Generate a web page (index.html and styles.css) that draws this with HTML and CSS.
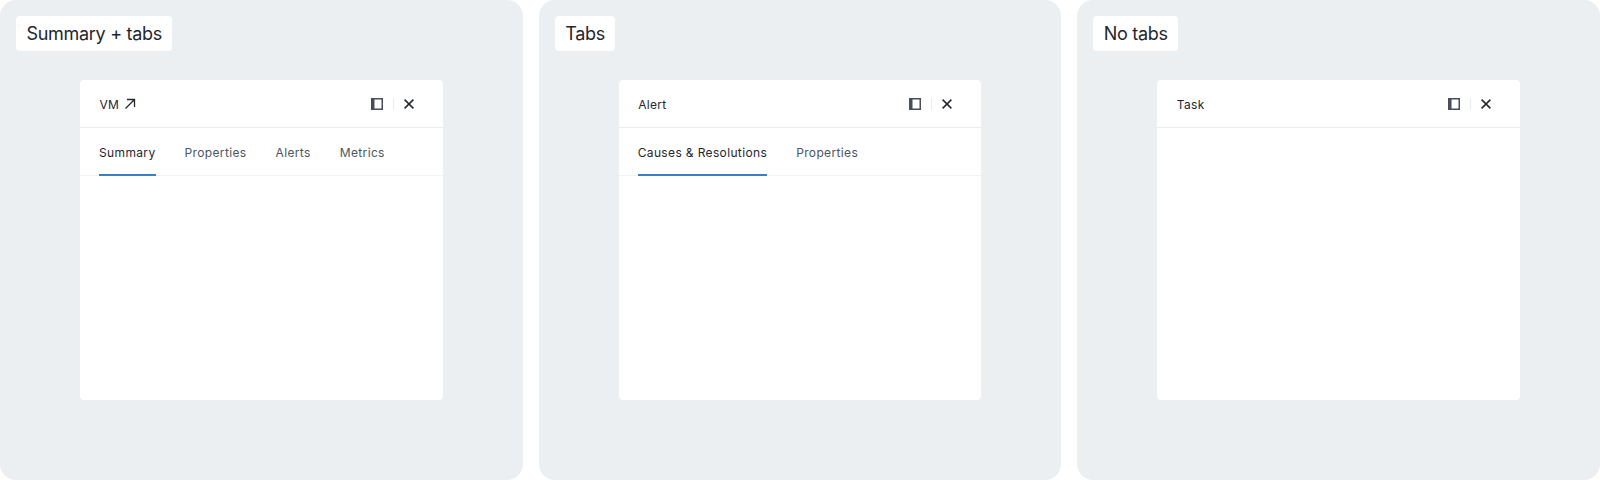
FILE: index.html
```html
<!DOCTYPE html>
<html lang="en">
<head>
    <meta charset="UTF-8">
    <meta name="viewport" content="width=device-width, initial-scale=1.0">
    <title>Side panel headers</title>
    <link rel="stylesheet" href="styles.css">
</head>
<body>
    <div class="panels">
        <section class="panel">
            <div class="panel-label">Summary + tabs</div>
            <div class="card">
                <div class="card-header">
                    <div class="card-title">
                        <span>VM</span>
                        <svg class="arrow-icon" viewBox="0 0 12 12" width="12" height="12"><path d="M1.5 10.5 10.5 1.5M3 1.5h7.5V9" fill="none" stroke="#22272e" stroke-width="1.3"/></svg>
                    </div>
                    <div class="card-actions">
                        <svg viewBox="0 0 12 12" width="12" height="12"><path d="M0 0h12v12H0zM3.5 1.5v9h7v-9z" fill="#454e5a" fill-rule="evenodd"/></svg>
                        <span class="divider"></span>
                        <svg viewBox="0 0 10 10" width="10" height="10"><path d="M.6.6l8.8 8.8M9.4.6.6 9.4" fill="none" stroke="#22272e" stroke-width="1.5"/></svg>
                    </div>
                </div>
                <div class="tabs">
                    <div class="tab active">Summary</div>
                    <div class="tab">Properties</div>
                    <div class="tab">Alerts</div>
                    <div class="tab">Metrics</div>
                </div>
            </div>
        </section>

        <section class="panel">
            <div class="panel-label">Tabs</div>
            <div class="card">
                <div class="card-header">
                    <div class="card-title"><span>Alert</span></div>
                    <div class="card-actions">
                        <svg viewBox="0 0 12 12" width="12" height="12"><path d="M0 0h12v12H0zM3.5 1.5v9h7v-9z" fill="#454e5a" fill-rule="evenodd"/></svg>
                        <span class="divider"></span>
                        <svg viewBox="0 0 10 10" width="10" height="10"><path d="M.6.6l8.8 8.8M9.4.6.6 9.4" fill="none" stroke="#22272e" stroke-width="1.5"/></svg>
                    </div>
                </div>
                <div class="tabs">
                    <div class="tab active">Causes &amp; Resolutions</div>
                    <div class="tab">Properties</div>
                </div>
            </div>
        </section>

        <section class="panel">
            <div class="panel-label">No tabs</div>
            <div class="card">
                <div class="card-header">
                    <div class="card-title"><span>Task</span></div>
                    <div class="card-actions">
                        <svg viewBox="0 0 12 12" width="12" height="12"><path d="M0 0h12v12H0zM3.5 1.5v9h7v-9z" fill="#454e5a" fill-rule="evenodd"/></svg>
                        <span class="divider"></span>
                        <svg viewBox="0 0 10 10" width="10" height="10"><path d="M.6.6l8.8 8.8M9.4.6.6 9.4" fill="none" stroke="#22272e" stroke-width="1.5"/></svg>
                    </div>
                </div>
            </div>
        </section>
    </div>
</body>
</html>
```

FILE: styles.css
```css
* {
    margin: 0;
    padding: 0;
    box-sizing: border-box;
}

body {
    font-family: 'Inter', 'Liberation Sans', sans-serif;
    background-color: white;
    color: #1f2630;
}

.panels {
    display: grid;
    grid-template-columns: repeat(3, 1fr);
    gap: 16px;
    height: 480px;
}

.panel {
    display: flex;
    flex-direction: column;
    align-items: flex-start;
    padding: 16px;
    background-color: #ebeff2;
    border-radius: 16px;
}

.panel-label {
    height: 35px;
    padding: 0 10.5px;
    line-height: 35px;
    font-size: 18px;
    letter-spacing: -0.3px;
    background-color: white;
    border-radius: 4px;
}

.card {
    align-self: stretch;
    height: 320px;
    margin: 29px 64px 0;
    background-color: white;
    border-radius: 4px;
}

.card-header {
    display: flex;
    justify-content: space-between;
    align-items: center;
    height: 48px;
    padding: 0 29px 0 19.5px;
    border-bottom: 1px solid #e9ebee;
}

.card-title {
    display: flex;
    align-items: center;
    gap: 5px;
    font-size: 12px;
    letter-spacing: 0.3px;
}

.card-title span {
    padding-top: 2px;
}

.card-actions {
    display: flex;
    align-items: center;
}

.divider {
    width: 1px;
    height: 12px;
    margin: 0 10px;
    background-color: #e9ebee;
}

.tabs {
    display: flex;
    gap: 29px;
    height: 48px;
    padding: 0 19px;
    border-bottom: 1px solid #f2f3f5;
}

.tab {
    height: 48px;
    line-height: 50px;
    font-size: 12px;
    letter-spacing: 0.36px;
    color: #4c5561;
}

.tab.active {
    color: #1f2630;
    border-bottom: 2px solid #3a7fc1;
}
```
